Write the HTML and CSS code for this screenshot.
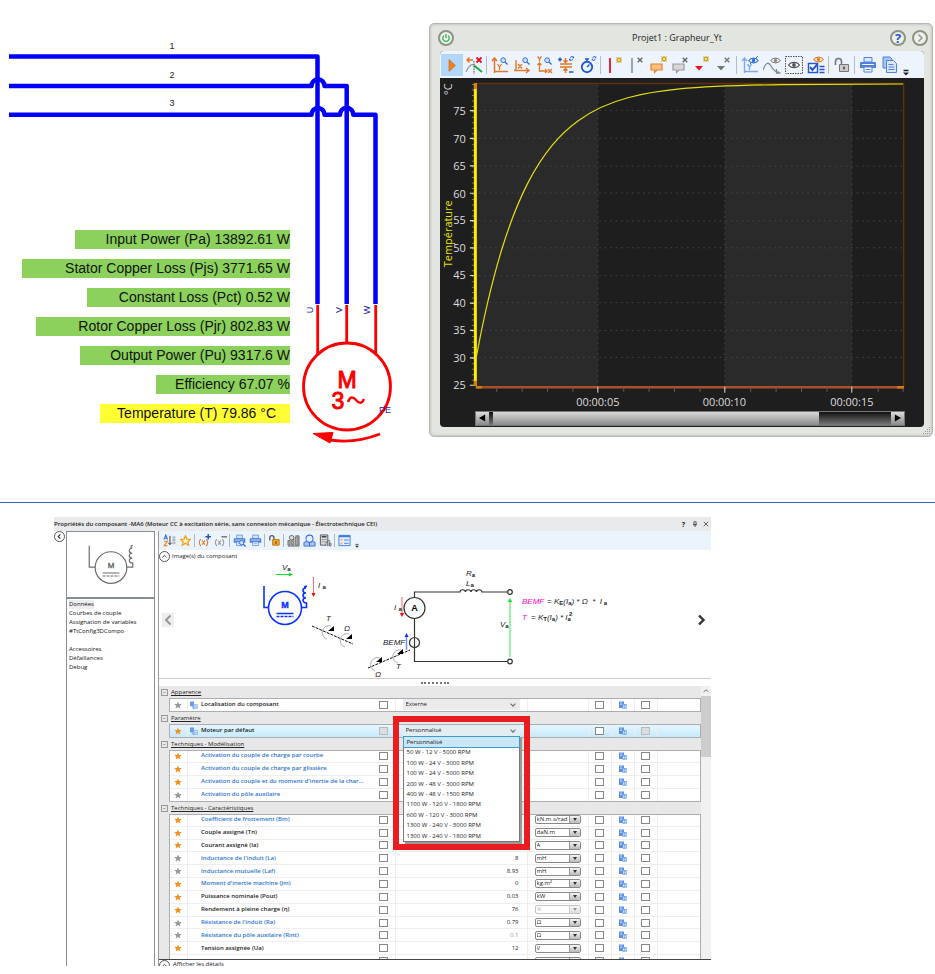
FILE: index.html
```html
<!DOCTYPE html>
<html lang="fr">
<head>
<meta charset="utf-8">
<meta name="viewport" content="width=device-width, initial-scale=1">
<title>Moteur asynchrone et moteur CC</title>
<link rel="stylesheet" href="styles.css">
</head>
<body>
<svg class="defs" aria-hidden="true">
  <defs>
    <symbol id="star" viewBox="0 0 10 10"><path d="M5 .5 6.3 3.7 9.7 3.9 7.1 6.1 8 9.5 5 7.6 2 9.5 2.9 6.1.3 3.9 3.7 3.7Z"/></symbol>
    <symbol id="copy" viewBox="0 0 8 8"><path d="M0 .5h5V7H0z" fill="#5b8ee6"/><path d="M1.2 2h2M1.2 3.5h1.5" stroke="#fff" stroke-width=".7"/><path d="M3.5 3h4.2v4.8H3.5z" fill="#7ba6f0"/><path d="M4.6 4.5v2.2M6.3 4.5v2.2" stroke="#fff" stroke-width=".7"/></symbol>
    <symbol id="var" viewBox="0 0 8 8"><path d="M0 .5h4V5h-4z" fill="#6d9aea"/><path d="M1 5h2v2.500h1" fill="none" stroke="#6d9aea"/><path d="M3.500 3.2h4.2v4.500H3.500z" fill="#8fb3f2"/><path d="M4.300 4.500h2.600M4.300 6h2.600" stroke="#fff" stroke-width=".6"/></symbol>
    <symbol id="lens" viewBox="0 0 8 8"><circle cx="3.2" cy="3.2" r="2.4" fill="#cfe0ff" stroke="#3d6fd8"/><path d="M5 5l2.500 2.500" stroke="#3d6fd8" stroke-width="1.4"/></symbol>
    <symbol id="eye" viewBox="0 0 12 8"><path d="M.6 4C3 .4 9 .4 11.4 4 9 7.6 3 7.6.6 4Z" fill="#fff" stroke="currentColor" stroke-width="1.2"/><circle cx="6" cy="4" r="1.9" fill="currentColor"/></symbol>
    <symbol id="spark" viewBox="0 0 6 6"><path d="M0 0 2 1 3 0l1 1 2-1-1 2 1 1-1 1 1 2-2-1-1 1-1-1-2 1 1-2-1-1 1-1z" fill="#c9a227"/><path d="M2 2h2v2H2z" fill="#ffe066"/></symbol>
    <symbol id="cross" viewBox="0 0 6 6"><path d="M.7.7l4.6 4.6M5.3.7.7 5.3" stroke="currentColor" stroke-width="1.4"/></symbol>
    <symbol id="printer" viewBox="0 0 18 18"><path d="M5 1.5h8V6H5z" fill="#dbe7ff" stroke="#4f82dc"/><path d="M2 6h14q1 0 1 1v5H1V7q0-1 1-1z" fill="#4f82dc"/><path d="M3 8.5h12" stroke="#fff"/><path d="M5 11h8v5H5z" fill="#fff" stroke="#4f82dc"/><path d="M6.500 13.500h5" stroke="#4f82dc"/></symbol>
    <symbol id="refresh" viewBox="0 0 6 6"><path d="M5 1.200Q3 0 1.400 1.800M1 4.800Q3 6 4.600 4.200" fill="none" stroke="#2458d0" stroke-width="1.200"/><path d="M6 0v2.600H3.600zM0 6V3.400h2.400z" fill="#2458d0"/></symbol>
  </defs>
</svg>

<main>
<section class="top">
  <div class="schematic">
    <svg class="wiring" viewBox="0 0 429 450" role="img" aria-label="Moteur triphasé">
      <g fill="none" stroke="#0000fb" stroke-width="4.500" stroke-linejoin="round">
        <path d="M9 56.500H317.500V304"/>
        <path d="M9 86H311.500A6.500 6.800 0 0 1 324.500 86H346.700V304"/>
        <path d="M9 114.700H311.500A6.500 6.800 0 0 1 324.500 114.700H340A6.500 6.800 0 0 1 353.300 114.700H375.500V304"/>
      </g>
      <g fill="none" stroke="#fb0000" stroke-width="2.800">
        <path d="M317.700 305V354M346.700 305V343M375.700 305V354"/>
        <circle cx="347" cy="386.500" r="43.500"/>
        <path d="M348 402q3-8 8-2t8-1" stroke-width="2.400"/>
        <path d="M380 434Q354 444 330 440"/>
        <path d="M313 433.500 333 432.500 330 443Z" fill="#fb0000" stroke-width="1"/>
      </g>
      <g class="wire-text"><text x="172" y="49">1</text><text x="172" y="78">2</text><text x="172" y="106">3</text></g>
      <g class="pin-text"><text transform="translate(312.500 310) rotate(-90)">U</text><text transform="translate(341.500 310) rotate(-90)">V</text><text transform="translate(370 310) rotate(-90)">W</text></g>
      <text class="pe-text" x="385" y="413">PE</text>
      <g class="motor-text"><text x="347" y="388">M</text><text x="338" y="409">3</text></g>
    </svg>
    <ul class="readings">
      <li class="w-pa">Input Power (Pa) 13892.61 W</li>
      <li class="w-pjs">Stator Copper Loss (Pjs) 3771.65 W</li>
      <li class="w-pct">Constant Loss (Pct) 0.52 W</li>
      <li class="w-pjr">Rotor Copper Loss (Pjr) 802.83 W</li>
      <li class="w-pu">Output Power (Pu) 9317.6 W</li>
      <li class="w-eff">Efficiency 67.07 %</li>
      <li class="w-temp">Temperature (T) 79.86 °C</li>
    </ul>
  </div>

  <section class="grapher" aria-label="Grapheur">
    <header class="g-title">
      <button class="round" aria-label="Marche"><svg viewBox="0 0 18 18"><path d="M6.300 6a4.200 4.200 0 1 0 5.400 0M9 4v5" fill="none" stroke="#2fb457" stroke-width="1.700"/></svg></button>
      <h1>Projet1 : Grapheur_Yt</h1>
      <button class="round help" aria-label="Aide">?</button>
      <button class="round" aria-label="Suivant"><svg viewBox="0 0 18 18"><path d="M7 4.500 11.500 9 7 13.500" fill="none" stroke="#999" stroke-width="2"/></svg></button>
    </header>
    <div class="g-inner">
      <div class="g-tools" role="toolbar">
        <button class="on" aria-label="Lecture"><svg viewBox="0 0 18 18"><path d="M6 3.500v12L12.500 9.500z" fill="#f08020" stroke="#c86414" stroke-width=".6"/></svg></button>
        <button aria-label="Effacer les courbes"><svg viewBox="0 0 18 18"><path d="M1 16Q5 7 9 9" fill="none" stroke="#999" stroke-width="1.300"/><path d="M9 9.500 17 16" stroke="#1eae3c" stroke-width="2"/><path d="M9 5v13" stroke="#444" stroke-dasharray="1.500 1"/><path d="M8 4H2M4.500 1.500 2 4l2.500 2.500" fill="none" stroke="#e07020" stroke-width="1.400"/><path d="M11.500 1.500l5 5M16.500 1.500l-5 5" stroke="#e81123" stroke-width="1.900"/></svg></button>
        <i></i>
        <button aria-label="Zoom Y"><svg viewBox="0 0 18 18"><path d="M3.500 17V2M1 5l2.500-3L6 5M3 15.500h14" fill="none" stroke="#e07828" stroke-width="1.500"/><path d="M6.500 8l2 3 2-3M8.500 11v3" fill="none" stroke="#e07828" stroke-width="1.200"/><use href="#lens" x="9" y="1" width="8" height="8"/></svg></button>
        <button aria-label="Zoom X"><svg viewBox="0 0 18 18"><path d="M3 4v11M1 14.500h14M13 12l3 2.500-3 2.500M5 8l4 4.500M9 8l-4 4.500" fill="none" stroke="#e07828" stroke-width="1.400"/><use href="#lens" x="9" y="1" width="8" height="8"/></svg></button>
        <button aria-label="Zoom X et Y"><svg viewBox="0 0 18 18"><path d="M4.500 7v8h7M2.500 9l2-2 2 2M10 13l2 2-2 2M2.500.5l2 2.500 2-2.500M4.500 3v2.500M13 13l4 4M17 13l-4 4" fill="none" stroke="#e07828" stroke-width="1.300"/><use href="#lens" x="9" y="1" width="8" height="8"/></svg></button>
        <button aria-label="Ajuster"><svg viewBox="0 0 18 18"><path d="M3 8h12M3 11h12M8.500 2v4.500M6.500 4.500l2 2 2-2M8.500 17v-4.500M6.500 14.500l2-2 2 2" fill="none" stroke="#e07828" stroke-width="1.500"/><path d="M1 3.500h4M3 1.500v4M12 16h4.500" stroke="#2458d0" stroke-width="1.500"/><use href="#refresh" x="12" y="0" width="5" height="5"/></svg></button>
        <button aria-label="Temps"><svg viewBox="0 0 18 18"><circle cx="8" cy="11" r="5.200" fill="none" stroke="#2458d0" stroke-width="1.900"/><path d="M6 3h4M8 3v3M8 11l2.500-2.500" stroke="#2458d0" stroke-width="1.500"/><use href="#refresh" x="12.500" y="0" width="5" height="5"/></svg></button>
        <i></i>
        <button aria-label="Ajouter curseur"><svg viewBox="0 0 18 18"><path d="M5 2v15" stroke="#e81123" stroke-width="1.800"/><use href="#spark" x="11" y="1" width="6" height="6"/></svg></button>
        <button aria-label="Supprimer curseur"><svg viewBox="0 0 18 18" color="#666"><path d="M5 2v15" stroke="#888" stroke-width="1.500"/><use href="#cross" x="10" y="1" width="6" height="6"/></svg></button>
        <button aria-label="Ajouter note"><svg viewBox="0 0 18 18"><path d="M2 8h11v6H8l-2.500 2.500V14H2z" fill="#fdc080" stroke="#e0822c" stroke-width="1.200"/><use href="#spark" x="12" y="0" width="6" height="6"/></svg></button>
        <button aria-label="Supprimer note"><svg viewBox="0 0 18 18" color="#666"><path d="M2 8h11v6H8l-2.500 2.500V14H2z" fill="#d8d8d8" stroke="#999" stroke-width="1.200"/><use href="#cross" x="11" y="1" width="6" height="6"/></svg></button>
        <button aria-label="Ajouter repère"><svg viewBox="0 0 18 18"><path d="M2 10h8l-4 4.500z" fill="#e81123"/><use href="#spark" x="10" y="0" width="6" height="6"/></svg></button>
        <button aria-label="Supprimer repère"><svg viewBox="0 0 18 18" color="#777"><path d="M2 10h8l-4 4.500z" fill="#777"/><use href="#cross" x="9" y="1" width="6" height="6"/></svg></button>
        <i></i>
        <button aria-label="Masquer axe"><svg viewBox="0 0 18 18" color="#2f6fe0"><path d="M3.500 17V2M1 5l2.500-3L6 5M3 15.500h14M6.500 8l2 3 2-3M8.500 11v3" fill="none" stroke="#7fa8ee" stroke-width="1.400"/><use href="#eye" x="7" y="1" width="11" height="7"/><path d="M9 8 17 0" stroke="#2f6fe0"/></svg></button>
        <button aria-label="Afficher courbe"><svg viewBox="0 0 18 18" color="#888"><path d="M0 14Q4 3 8 10t8 6M13.500 13v4h4" fill="none" stroke="#888" stroke-width="1.300"/><use href="#eye" x="7" y="1" width="11" height="7"/></svg></button>
        <button aria-label="Afficher"><svg viewBox="0 0 18 18" color="#555"><path d="M.5.5h17v17H.5z" fill="none" stroke="#555" stroke-dasharray="1.500 1"/><use href="#eye" x="3" y="5" width="12" height="8"/></svg></button>
        <button aria-label="Options de courbes"><svg viewBox="0 0 18 18" color="#ee7a22"><path d="M1.500 7.500h9v9h-9z" fill="#fff" stroke="#2458d0" stroke-width="1.500"/><path d="M3 11l2.500 3 5-6" fill="none" stroke="#2458d0" stroke-width="2"/><path d="M12.500 10.500h5M12.500 13.500h5M12.500 16.500h5" stroke="#2458d0" stroke-width="1.300"/><use href="#eye" x="6" y="0" width="11" height="7"/></svg></button>
        <i></i>
        <button aria-label="Déverrouiller"><svg viewBox="0 0 18 18"><path d="M2.500 9V5.500a3 3 0 0 1 6 0V8" fill="none" stroke="#777" stroke-width="1.600"/><path d="M6.500 8.500h9v7h-9z" fill="#ccc" stroke="#777"/><path d="M10 10.500h2v3h-2z" fill="#666"/></svg></button>
        <i></i>
        <button aria-label="Imprimer"><svg viewBox="0 0 18 18"><use href="#printer"/></svg></button>
        <button aria-label="Copier"><svg viewBox="0 0 18 18"><path d="M2 1h7l2 2v9H2z" fill="#a9c4f5" stroke="#4f82dc"/><path d="M5.500 4.500h7l3 3v9h-10z" fill="#dbe7ff" stroke="#4f82dc"/><path d="M7.500 8.500h5M7.500 11h6M7.500 13.500h6" stroke="#4f82dc"/></svg></button>
        <button class="more" aria-label="Plus"><svg viewBox="0 0 8 8"><path d="M1.500 2.500h5" stroke="#222" stroke-width="1.300"/><path d="M1 4.500h6L4 7.500z" fill="#222"/></svg></button>
      </div>
      <svg class="plot" viewBox="439 77 486 334" role="img" aria-label="Température en °C">
        <path d="M475 83H597.500V387H475zM725 83H852.500V387H725z" fill="#2a2a2a"/>
        <g stroke="#484848" stroke-width="1" stroke-dasharray="1.500 4">
          <path d="M478 109.500H903M478 137.500H903M478 165.500H903M478 192.500H903M478 220.500H903M478 247.500H903M478 275.500H903M478 302.500H903M478 330.500H903M478 357.500H903"/>
          <path d="M597.500 84V386M725 84V386M852.500 84V386"/>
        </g>
        <path d="M475 82.500H904.500V386" fill="none" stroke="#643008" stroke-width="1.400"/>
        <path d="M475 387.500H905" stroke="#a8502a" stroke-width="2.600"/>
        <path d="M475 387.500h6M898 387.500h7" stroke="#d87c10" stroke-width="2.600"/>
        <path d="M472 83V385" stroke="#777" stroke-width="2" stroke-dasharray="1 4.500"/>
        <path d="M474.500 82V386" stroke="#ffee00" stroke-width="3"/>
        <path d="M474.500 82v6M474.500 381v5" stroke="#d87c10" stroke-width="3"/>
        <path d="M469 109.700h4M469 137.700h4M469 165.300h4M469 192.700h4M469 220.200h4M469 247.600h4M469 275.300h4M469 303h4M469 330.400h4M469 358h4M469 385.500h4" stroke="#ddd" stroke-width="1.200"/>
        <path d="M496 389v3M521.500 389v3M547 389v3M572.500 389v3M623.500 389v3M649 389v3M674.500 389v3M700 389v3M751 389v3M776.500 389v3M802 389v3M827.500 389v3M879 389v3M904 389v3" stroke="#666"/>
        <path d="M597.500 387v6M725 387v6M852.500 387v6" stroke="#ddd"/>
        <path d="M475.500 357C484 311.400 492.500 276.900 501 249.200C509.500 221.500 518 200.600 526.500 183.800C535 167 543.500 154.300 552 144.100C560.500 133.900 569 126.300 577.500 120.100C594.500 107.700 611.500 101.100 628.500 96.600C645.500 92.100 662.500 89.700 679.500 88C713.500 84.700 747.500 84.200 781.500 83.700L904 83" fill="none" stroke="#e3df10" stroke-width="1.200"/>
        <g class="y-text"><text x="465" y="114">75</text><text x="465" y="142">70</text><text x="465" y="169">65</text><text x="465" y="197">60</text><text x="465" y="224">55</text><text x="465" y="252">50</text><text x="465" y="279">45</text><text x="465" y="307">40</text><text x="465" y="334">35</text><text x="465" y="362">30</text><text x="465" y="389">25</text></g>
        <g class="x-text"><text x="597.500" y="406">00:00:05</text><text x="724.500" y="406">00:00:10</text><text x="852.500" y="406">00:00:15</text></g>
        <text class="unit-text" transform="translate(451 94) rotate(-90)">°C</text>
        <text class="axis-text" transform="translate(451 267) rotate(-90)">Température</text>
      </svg>
      <div class="g-scroll">
        <button aria-label="Défiler à gauche"><svg viewBox="0 0 8 8"><path d="M7 0v8L0 4z"/></svg></button>
        <div class="g-track"><div class="g-thumb"></div></div>
        <button aria-label="Défiler à droite"><svg viewBox="0 0 8 8"><path d="M1 0v8l7-4z"/></svg></button>
      </div>
    </div>
    <svg class="grip" viewBox="0 0 9 9" aria-hidden="true"><path d="M7 1h1v1H7zM5 3h1v1H5zM7 3h1v1H7zM3 5h1v1H3zM5 5h1v1H5zM7 5h1v1H7zM1 7h1v1H1zM3 7h1v1H3zM5 7h1v1H5zM7 7h1v1H7z" fill="#999"/></svg>
  </section>
</section>

<hr>

<section class="props">
  <header class="p-title">
    <h2>Propriétés du composant -MA6 (Moteur CC à excitation série, sans connexion mécanique - Électrotechnique CEI)</h2>
    <button aria-label="Aide">?</button>
    <button aria-label="Épingler"><svg viewBox="0 0 8 8"><path d="M2.500 1h3v4h-3zM1.500 5h5M4 5v3" fill="none" stroke="#333"/></svg></button>
    <button aria-label="Fermer"><svg viewBox="0 0 8 8"><path d="M1 1l6 6M7 1 1 7" stroke="#333"/></svg></button>
  </header>
  <div class="p-body">
    <button class="fold" aria-label="Réduire"><svg viewBox="0 0 8 8"><path d="M5 1.500 2.500 4 5 6.500" fill="none" stroke="#333" stroke-width="1.300"/></svg></button>
    <aside>
      <svg class="thumb" viewBox="66 532 88 66" role="img" aria-label="Symbole du moteur">
        <g fill="none" stroke="#6c6c6c" stroke-width="1.200"><circle cx="110.500" cy="568" r="16"/><path d="M88.500 546V567.500H94.500M126.500 567.500H132.500V563.500C128 563.500 128 558 132 558.500C128 558.500 128 553 132 553.500C128 553.500 128 548 132 548.500C130 548 130 546 132.500 545.500M102 573.500H119"/><path d="M102 576.500H119" stroke-dasharray="3 1"/></g>
        <text class="thumb-m" x="110.500" y="568">M</text>
      </svg>
      <nav>
        <a class="cur" href="#donnees">Données</a>
        <a href="#courbes">Courbes de couple</a>
        <a href="#variables">Assignation de variables</a>
        <a href="#config">#TtConfig3DCompo</a>
        <a class="apart" href="#accessoires">Accessoires</a>
        <a href="#defaillances">Défaillances</a>
        <a href="#debug">Debug</a>
      </nav>
    </aside>
    <div class="p-main">
      <div class="p-tools" role="toolbar">
        <button aria-label="Trier"><svg viewBox="0 0 14 14"><path d="M1 6 3 1l2 5M1.800 4.500h2.400" fill="none" stroke="#2f6fd0" stroke-width="1.100"/><path d="M1.300 8h3.400L1.300 12.500h3.400" fill="none" stroke="#ee8a1d" stroke-width="1.200"/><path d="M7.500 2v9M5.800 9.500l1.700 2 1.700-2" fill="none" stroke="#333"/><path d="M10.500 3H13v1.500h-2.500zM10.500 6H13v1.500h-2.500zM10.500 9H13v1.500h-2.500z" fill="none" stroke="#888" stroke-width=".6"/></svg></button>
        <button aria-label="Favoris"><svg viewBox="-1 -1 12 12" fill="#fff3c9" stroke="#f0a020" stroke-width="1.100"><use href="#star" width="10" height="10"/></svg></button>
        <i></i>
        <button aria-label="Ajouter variable"><svg viewBox="0 0 14 14"><path d="M3 5.500Q0 9 3 13M9 5.500q3 3.500 0 7.500M4.500 7l3 4.500M7.500 7l-3 4.500" fill="none" stroke="#e07828" stroke-width="1.100"/><path d="M11 0v6M8 3h6" stroke="#2458d0" stroke-width="1.600"/></svg></button>
        <button aria-label="Retirer variable"><svg viewBox="0 0 14 14"><path d="M3 5.500Q0 9 3 13M9 5.500q3 3.500 0 7.500M4.500 7l3 4.500M7.500 7l-3 4.500" fill="none" stroke="#999" stroke-width="1.100"/><path d="M8 3h6" stroke="#777" stroke-width="1.600"/></svg></button>
        <i></i>
        <button aria-label="Aperçu avant impression"><svg viewBox="0 0 18 18"><use href="#printer"/><use href="#lens" x="8" y="8" width="10" height="10"/></svg></button>
        <button aria-label="Imprimer"><svg viewBox="0 0 18 18"><use href="#printer"/></svg></button>
        <i></i>
        <button aria-label="Déverrouiller"><svg viewBox="0 0 14 14"><path d="M2 7V4a2.200 2.200 0 0 1 4.400 0V6" fill="none" stroke="#555" stroke-width="1.400"/><path d="M5 6h7v6H5z" fill="#f5a623" stroke="#b97510"/><path d="M8 8h1.200v2.500H8z" fill="#333"/></svg></button>
        <i></i>
        <button aria-label="Mesures"><svg viewBox="0 0 14 14"><path d="M1 12V7h2.500v5zM5 12V5h2.500v7zM9 12V3h3v9z" fill="#aaa" stroke="#555" stroke-width=".7"/><circle cx="5" cy="4" r="2.500" fill="#ddd" stroke="#666"/><path d="M9 2h4v11H1" fill="none" stroke="#666"/></svg></button>
        <button aria-label="Rechercher"><svg viewBox="0 0 14 14"><path d="M1 13V9q3-2 6 0v4zM7 13V9q3-2 6 0v4z" fill="#a9c4f5" stroke="#3d6fd8"/><circle cx="7" cy="5" r="3.800" fill="#e8f0ff" stroke="#3d6fd8" stroke-width="1.100"/></svg></button>
        <button aria-label="Calculer"><svg viewBox="0 0 14 14"><path d="M1.500 1h8v11h-8z" fill="#ddd" stroke="#555"/><path d="M3 3h5" stroke="#333" stroke-width="1.500"/><path d="M3 6h5M3 8.500h5" stroke="#555" stroke-dasharray="1 1"/><path d="M7.500 13V9h2v4M9.500 13V7h2v6M11.500 13v-3h1.500v3z" fill="#eee" stroke="#555" stroke-width=".7"/></svg></button>
        <i></i>
        <button aria-label="Liste"><svg viewBox="0 0 14 14"><path d="M1 1.500h12v11H1z" fill="#e8f1ff" stroke="#3c7be0"/><path d="M1 2.500h12" stroke="#3c7be0" stroke-width="2"/><path d="M2.500 6l1 1L5 5M2.500 10l1 1L5 9" fill="none" stroke="#ee8a1d"/><path d="M6.500 6.500h5M6.500 10h5" stroke="#3c7be0"/></svg></button>
        <button class="more" aria-label="Plus"><svg viewBox="0 0 8 8"><path d="M2 3.200h4" stroke="#222"/><path d="M1.500 5h5L4 7.500z" fill="#222"/></svg></button>
      </div>
      <div class="p-sub"><button class="fold" aria-label="Replier"><svg viewBox="0 0 8 8"><path d="M1.500 5 4 2.800 6.500 5" fill="none" stroke="#333"/></svg></button><span>Image(s) du composant</span></div>
      <div class="carousel">
        <button class="prev" aria-label="Image précédente"><svg viewBox="0 0 12 14"><path d="M8.500 2.500 4 7l4.500 4.500" fill="none" stroke="#999" stroke-width="2"/></svg></button>
        <svg class="model" viewBox="174 562 522 116" role="img" aria-label="Schéma équivalent">
          <g fill="none" stroke="#0b32ff" stroke-width="1.600"><circle cx="285" cy="608" r="16.500"/><path d="M264 586V607.500H268.500M301.500 607.500H306.500V603C302 603 302 597.500 306 598C302 598 302 592.500 306 593C302 593 302 587.500 306 588C304 588 304 586 307 586.500M276.500 613.500H293.500"/><path d="M276.500 616.500H293.500" stroke-dasharray="3 1"/></g>
          <text class="blue-m" x="285" y="608">M</text>
          <path d="M276 574.500H290" stroke="#0be62a"/><path d="M293 574.500l-4-2v4z" fill="#0be62a"/>
          <path d="M313.500 577V594" stroke="#ff7070"/><path d="M313.500 597l-2-4h4z" fill="#f00"/>
          <path d="M402 597V613" stroke="#ffb0b0" stroke-width="2"/><path d="M402 617l-2-4h4z" fill="#f00"/>
          <path d="M406.500 650V637" stroke="#7090ff" stroke-width="1.500"/><path d="M406.500 633l-2 4h4z" fill="#0b32ff"/>
          <path d="M510 657V602" stroke="#85f095" stroke-width="1.600"/><path d="M510 598l-2.200 4h4.400z" fill="#0be62a"/>
          <g fill="none" stroke="#333" stroke-width="1.200"><path d="M414.500 597.500V592H460C460 589 465 589 465.500 592C465.500 589 470.500 589 471 592C471 589 476 589 476.500 592C476.500 589 481.500 589 482 592H507.500M414.500 618.500V661.500H507.500"/><circle cx="414.500" cy="608" r="10.500"/><circle cx="414.500" cy="642.500" r="5"/><circle cx="510" cy="592" r="2.300"/><circle cx="510" cy="661.500" r="2.300"/></g>
          <g fill="none" stroke="#111" stroke-dasharray="3 1"><path d="M312 626 353 644M368 668 410 650"/></g>
          <g fill="none" stroke="#999" stroke-width=".8"><path d="M331 626A6.500 6.500 0 1 0 327 639M349 634A6.500 6.500 0 1 0 345 647M380 658A6.500 6.500 0 1 0 375 671M401 650A6.500 6.500 0 1 0 398 663"/></g>
          <path d="M334 626v5h-6zM352 634v5h-6zM382 657v5h-6zM403 649v5h-6z"/>
          <g class="sym"><text x="282" y="570">V<tspan class="sub" dy="1">a</tspan></text><text x="318" y="588">I <tspan class="sub" dy="1">a</tspan></text><text x="326" y="621">T</text><text x="344" y="631">Ω</text><text x="375" y="677">Ω</text><text x="396" y="669">T</text><text x="383" y="645">BEMF</text><text x="394" y="610">I <tspan class="sub" dy="1">a</tspan></text><text x="466" y="576">R<tspan class="sub" dy="1">a</tspan></text><text x="466" y="586">L<tspan class="sub" dy="1">a</tspan></text><text x="500" y="627">V<tspan class="sub" dy="1">a</tspan></text>
            <text x="522" y="604"><tspan class="pink">BEMF</tspan></text><text x="547" y="604">= K<tspan class="sub" dy="1">E</tspan><tspan dy="-1">(I</tspan><tspan class="sub" dy="1">a</tspan><tspan dy="-1">) * Ω &#160;* &#160;I</tspan><tspan class="sub" dy="1"> a</tspan></text>
            <text x="522" y="620"><tspan class="pink">T</tspan></text><text x="531" y="620">= K<tspan class="sub" dy="1">T</tspan><tspan dy="-1">(I</tspan><tspan class="sub" dy="1">a</tspan><tspan dy="-1">) * I</tspan><tspan class="sub" dy="1">a</tspan></text><text class="sub" x="569" y="616">2</text></g>
          <text class="amp" x="414.500" y="611">A</text>
        </svg>
        <button aria-label="Image suivante"><svg viewBox="0 0 12 14"><path d="M3 2.500 7.500 7 3 11.500" fill="none" stroke="#333" stroke-width="2.400"/></svg></button>
      </div>
      <div class="splitter"></div>
      <div class="sheet">
        <div class="gutter"></div>
        <div class="groups">
          <h3>Apparence</h3>
          <table class="one"><colgroup><col class="c-star"><col class="c-ico"><col class="c-name"><col class="c-chk"><col class="c-val"><col class="c-unit"><col class="c-s"><col class="c-s"><col class="c-s"><col></colgroup>
            <tbody><tr><td><svg class="st"><use href="#star"/></svg></td><td><svg class="cp"><use href="#var"/></svg></td><th scope="row">Localisation du composant</th><td><input type="checkbox" aria-label="Localisation"></td><td class="pick"><select aria-label="Localisation du composant"><option>Externe</option></select></td><td></td><td><input type="checkbox" aria-label="A"></td><td><svg class="cp"><use href="#copy"/></svg></td><td><input type="checkbox" aria-label="B"></td><td></td></tr></tbody></table>
          <h3>Paramètre</h3>
          <table class="one hot"><colgroup><col class="c-star"><col class="c-ico"><col class="c-name"><col class="c-chk"><col class="c-val"><col class="c-unit"><col class="c-s"><col class="c-s"><col class="c-s"><col></colgroup>
            <tbody><tr><td><svg class="st gold"><use href="#star"/></svg></td><td><svg class="cp"><use href="#var"/></svg></td><th scope="row">Moteur par défaut</th><td><input type="checkbox" disabled aria-label="Moteur"></td><td class="pick"><select aria-label="Moteur par défaut"><option>Personnalisé</option></select>
              <ul class="menu" role="listbox" aria-label="Moteurs"><li role="option" aria-selected="true">Personnalisé</li><li role="option">50 W - 12 V - 5000 RPM</li><li role="option">100 W - 24 V - 3000 RPM</li><li role="option">100 W - 24 V - 5000 RPM</li><li role="option">200 W - 48 V - 3000 RPM</li><li role="option">400 W - 48 V - 1500 RPM</li><li role="option">1100 W - 120 V - 1800 RPM</li><li role="option">600 W - 120 V - 3000 RPM</li><li role="option">1300 W - 240 V - 3000 RPM</li><li role="option">1300 W - 240 V - 1800 RPM</li></ul><div class="frame"></div></td><td></td><td><input type="checkbox" aria-label="A"></td><td><svg class="cp"><use href="#copy"/></svg></td><td><input type="checkbox" disabled aria-label="B"></td><td></td></tr></tbody></table>
          <h3>Techniques - Modélisation</h3>
          <table class="four"><colgroup><col class="c-star"><col class="c-ico"><col class="c-name"><col class="c-chk"><col class="c-val"><col class="c-unit"><col class="c-s"><col class="c-s"><col class="c-s"><col></colgroup>
            <tbody>
            <tr><td><svg class="st gold"><use href="#star"/></svg></td><td></td><th scope="row" class="bl">Activation du couple de charge par courbe</th><td><input type="checkbox" aria-label="Courbe"></td><td></td><td></td><td><input type="checkbox" aria-label="A"></td><td><svg class="cp"><use href="#copy"/></svg></td><td><input type="checkbox" aria-label="B"></td><td></td></tr>
            <tr><td><svg class="st gold"><use href="#star"/></svg></td><td></td><th scope="row" class="bl">Activation du couple de charge par glissière</th><td><input type="checkbox" aria-label="Glissière"></td><td></td><td></td><td><input type="checkbox" aria-label="A"></td><td><svg class="cp"><use href="#copy"/></svg></td><td><input type="checkbox" aria-label="B"></td><td></td></tr>
            <tr><td><svg class="st gold"><use href="#star"/></svg></td><td></td><th scope="row" class="bl">Activation du couple et du moment d'inertie de la char...</th><td><input type="checkbox" aria-label="Inertie"></td><td></td><td></td><td><input type="checkbox" aria-label="A"></td><td><svg class="cp"><use href="#copy"/></svg></td><td><input type="checkbox" aria-label="B"></td><td></td></tr>
            <tr><td><svg class="st"><use href="#star"/></svg></td><td></td><th scope="row" class="bl">Activation du pôle auxilaire</th><td><input type="checkbox" aria-label="Pôle"></td><td></td><td></td><td><input type="checkbox" aria-label="A"></td><td><svg class="cp"><use href="#copy"/></svg></td><td><input type="checkbox" aria-label="B"></td><td></td></tr>
            </tbody></table>
          <h3>Techniques - Caractéristiques</h3>
          <table class="many"><colgroup><col class="c-star"><col class="c-ico"><col class="c-name"><col class="c-chk"><col class="c-val"><col class="c-unit"><col class="c-s"><col class="c-s"><col class="c-s"><col></colgroup>
            <tbody>
            <tr><td><svg class="st gold"><use href="#star"/></svg></td><td></td><th scope="row" class="bl">Coefficient de frottement (Bm)</th><td><input type="checkbox" aria-label="Bm"></td><td class="num"></td><td><span class="unit"><select aria-label="Unité Bm"><option>kN.m.s/rad</option></select><b></b></span></td><td><input type="checkbox" aria-label="A"></td><td><svg class="cp"><use href="#copy"/></svg></td><td><input type="checkbox" aria-label="B"></td><td></td></tr>
            <tr><td><svg class="st gold"><use href="#star"/></svg></td><td></td><th scope="row">Couple assigné (Tn)</th><td><input type="checkbox" aria-label="Tn"></td><td class="num"></td><td><span class="unit"><select aria-label="Unité Tn"><option>daN.m</option></select><b></b></span></td><td><input type="checkbox" aria-label="A"></td><td><svg class="cp"><use href="#copy"/></svg></td><td><input type="checkbox" aria-label="B"></td><td></td></tr>
            <tr><td><svg class="st gold"><use href="#star"/></svg></td><td></td><th scope="row">Courant assigné (Ia)</th><td><input type="checkbox" aria-label="Ia"></td><td class="num"></td><td><span class="unit"><select aria-label="Unité Ia"><option>A</option></select><b></b></span></td><td><input type="checkbox" aria-label="A"></td><td><svg class="cp"><use href="#copy"/></svg></td><td><input type="checkbox" aria-label="B"></td><td></td></tr>
            <tr><td><svg class="st"><use href="#star"/></svg></td><td></td><th scope="row" class="bl">Inductance de l'induit (La)</th><td><input type="checkbox" aria-label="La"></td><td class="num">8</td><td><span class="unit"><select aria-label="Unité La"><option>mH</option></select><b></b></span></td><td><input type="checkbox" aria-label="A"></td><td><svg class="cp"><use href="#copy"/></svg></td><td><input type="checkbox" aria-label="B"></td><td></td></tr>
            <tr><td><svg class="st"><use href="#star"/></svg></td><td></td><th scope="row" class="bl">Inductance mutuelle (Laf)</th><td><input type="checkbox" aria-label="Laf"></td><td class="num">8.93</td><td><span class="unit"><select aria-label="Unité Laf"><option>mH</option></select><b></b></span></td><td><input type="checkbox" aria-label="A"></td><td><svg class="cp"><use href="#copy"/></svg></td><td><input type="checkbox" aria-label="B"></td><td></td></tr>
            <tr><td><svg class="st gold"><use href="#star"/></svg></td><td></td><th scope="row" class="bl">Moment d'inertie machine (Jm)</th><td><input type="checkbox" aria-label="Jm"></td><td class="num">0</td><td><span class="unit"><select aria-label="Unité Jm"><option>kg.m²</option></select><b></b></span></td><td><input type="checkbox" aria-label="A"></td><td><svg class="cp"><use href="#copy"/></svg></td><td><input type="checkbox" aria-label="B"></td><td></td></tr>
            <tr><td><svg class="st gold"><use href="#star"/></svg></td><td></td><th scope="row">Puissance nominale (Pout)</th><td><input type="checkbox" aria-label="Pout"></td><td class="num">0.03</td><td><span class="unit"><select aria-label="Unité Pout"><option>kW</option></select><b></b></span></td><td><input type="checkbox" aria-label="A"></td><td><svg class="cp"><use href="#copy"/></svg></td><td><input type="checkbox" aria-label="B"></td><td></td></tr>
            <tr><td><svg class="st gold"><use href="#star"/></svg></td><td></td><th scope="row">Rendement à pleine charge (η)</th><td><input type="checkbox" aria-label="η"></td><td class="num">76</td><td><span class="unit off"><select aria-label="Unité η" disabled><option>%</option></select><b></b></span></td><td><input type="checkbox" aria-label="A"></td><td><svg class="cp"><use href="#copy"/></svg></td><td><input type="checkbox" aria-label="B"></td><td></td></tr>
            <tr><td><svg class="st"><use href="#star"/></svg></td><td></td><th scope="row" class="bl">Résistance de l'induit (Ra)</th><td><input type="checkbox" aria-label="Ra"></td><td class="num">0.79</td><td><span class="unit"><select aria-label="Unité Ra"><option>Ω</option></select><b></b></span></td><td><input type="checkbox" aria-label="A"></td><td><svg class="cp"><use href="#copy"/></svg></td><td><input type="checkbox" aria-label="B"></td><td></td></tr>
            <tr><td><svg class="st"><use href="#star"/></svg></td><td></td><th scope="row" class="bl">Résistance du pôle auxilaire (Rint)</th><td><input type="checkbox" aria-label="Rint"></td><td class="num dim">0.1</td><td><span class="unit"><select aria-label="Unité Rint"><option>Ω</option></select><b></b></span></td><td><input type="checkbox" aria-label="A"></td><td><svg class="cp"><use href="#copy"/></svg></td><td><input type="checkbox" aria-label="B"></td><td></td></tr>
            <tr><td><svg class="st gold"><use href="#star"/></svg></td><td></td><th scope="row">Tension assignée (Ua)</th><td><input type="checkbox" aria-label="Ua"></td><td class="num">12</td><td><span class="unit"><select aria-label="Unité Ua"><option>V</option></select><b></b></span></td><td><input type="checkbox" aria-label="A"></td><td><svg class="cp"><use href="#copy"/></svg></td><td><input type="checkbox" aria-label="B"></td><td></td></tr>
            <tr><td></td><td></td><th scope="row"></th><td><input type="checkbox" aria-label="C"></td><td class="num"></td><td><span class="unit"><select aria-label="Unité"><option> </option></select><b></b></span></td><td><input type="checkbox" aria-label="A"></td><td><svg class="cp"><use href="#copy"/></svg></td><td><input type="checkbox" aria-label="B"></td><td></td></tr>
            </tbody></table>
        </div>
        <div class="v-scroll"><svg viewBox="0 0 8 8"><path d="M1.500 5 4 2.800 6.500 5" fill="none" stroke="#777"/></svg><div></div><svg viewBox="0 0 8 8"><path d="M1.500 3 4 5.200 6.500 3" fill="none" stroke="#777"/></svg></div>
      </div>
      <footer class="p-foot"><button class="fold" aria-label="Déplier"><svg viewBox="0 0 8 8"><path d="M1.500 5 4 2.800 6.500 5" fill="none" stroke="#333"/></svg></button><span>Afficher les détails</span></footer>
    </div>
  </div>
</section>
</main>
</body>
</html>
```
FILE: styles.css
```css
* { box-sizing: border-box; }
body { margin: 0; background: #fff; color: #222; font-family: "Open Sans", "Noto Sans", sans-serif; }
h1, h2, h3, ul { margin: 0; padding: 0; font-weight: normal; }
ul { list-style: none; }
button { border: 0; padding: 0; background: none; font: inherit; color: inherit; display: flex; align-items: center; justify-content: center; }
svg { display: block; }
.defs { position: absolute; width: 0; height: 0; }

/* three-phase motor and its readings */
.top { display: grid; grid-template-columns: 429px minmax(0, 1fr); align-items: start; }
.schematic { display: grid; }
.wiring { grid-area: 1 / 1; width: 100%; }
.readings { grid-area: 1 / 1; width: 290px; padding-top: 230px; display: flex; flex-direction: column; align-items: flex-end; gap: 10px; font: 14px/19px "Liberation Sans", sans-serif; color: #111; }
.readings li { background: #8bd15b; text-align: right; white-space: nowrap; }
.readings .w-pa { width: 215px; }
.readings .w-pjs { width: 268px; }
.readings .w-pct { width: 203px; }
.readings .w-pjr { width: 254px; }
.readings .w-pu { width: 210px; }
.readings .w-eff { width: 134px; }
.readings .w-temp { width: 190px; padding-right: 14px; background: #ffff33; }
.wire-text, .pin-text, .pe-text, .motor-text { font-family: "Liberation Sans", sans-serif; text-anchor: middle; }
.wire-text { font-size: 9px; fill: #222; }
.pin-text { font-size: 9px; fill: #1c1caa; }
.pe-text { font-size: 9px; fill: #1c1caa; }
.motor-text { font-size: 23px; fill: #fb0000; stroke: #fb0000; stroke-width: 1; }

/* grapher window */
.grapher { position: relative; margin: 23px 2px 0 0; padding: 0 8px 9px 10px; border: 1px solid #b4b8b0; border-radius: 5px; background: #e3e6e0; box-shadow: inset 0 0 3px #aaa; }
.g-title { height: 27px; display: flex; align-items: center; gap: 6px; margin: 0 -4px 0 -2px; }
.g-title h1 { flex: 1; text-align: center; font-size: 9px; padding-left: 10px; color: #222; }
.round { width: 16px; height: 16px; border: 2px solid #8c9484; border-radius: 50%; background: #eef0ea; }
.round svg { width: 14px; height: 14px; flex: none; }
.help { font-size: 13px; line-height: 12px; font-weight: bold; color: #2458d0; }
.g-inner { background: #1e1e1e; border-radius: 4px; overflow: hidden; padding-bottom: 1px; }
.g-tools { height: 27px; display: flex; align-items: center; background: #eef4fd; padding-left: 1px; }
.g-tools button { width: 22px; height: 22px; flex: none; }
.g-tools svg { width: 18px; height: 18px; }
.g-tools .on { background: #b3d6fb; }
.g-tools i { width: 1px; height: 18px; margin: 0 2px 0 1px; background: #b5bbc4; flex: none; }
.g-tools .more, .p-tools .more { width: 10px; align-items: flex-end; }
.g-tools .more svg { width: 8px; height: 8px; }
.p-tools .more svg { width: 6px; height: 6px; }
.plot { width: 100%; }
.y-text, .x-text, .unit-text, .axis-text { font-family: "Open Sans", sans-serif; font-size: 11px; fill: #ddd; }
.y-text { text-anchor: end; }
.x-text { text-anchor: middle; }
.axis-text { fill: #e6e200; }
.g-scroll { margin: 0 19px 0 35px; height: 15px; display: flex; border: 1px solid #777; }
.g-scroll button { width: 13px; background: linear-gradient(#ddd, #888); }
.g-scroll button svg { width: 7px; height: 8px; }
.g-track { flex: 1; background: linear-gradient(#111, #777); padding-left: 4px; }
.g-thumb { width: 82%; height: 100%; background: linear-gradient(#d8d8d8, #8a8a8a); }
.grip { position: absolute; right: 1px; bottom: 1px; width: 9px; height: 9px; }

hr { margin: 52px 0 14px; border: 0; border-top: 1px solid #3a62b5; }

/* component properties window */
.props { margin-left: 54px; max-width: 657px; font-size: 6px; line-height: 9px; }
.p-title { height: 14px; display: flex; align-items: center; gap: 2px; background: #e9eaec; padding-right: 1px; }
.p-title h2 { flex: 1; font-size: 6px; font-weight: 600; white-space: nowrap; }
.p-title button { width: 9px; font-size: 7px; font-weight: bold; }
.p-title svg { width: 6px; height: 6px; }
.p-body { display: grid; grid-template-columns: 12px 89px minmax(0, 1fr); align-items: stretch; height: 435px; overflow: hidden; }
.fold { width: 11px; height: 11px; border: 1px solid #555; border-radius: 50%; background: #fff; flex: none; }
.fold svg { width: 7px; height: 7px; }
aside { display: flex; flex-direction: column; }
.thumb { width: 100%; border: 1px solid #888e99; }
.thumb-m, .blue-m, .amp { font: 8px "Liberation Sans", sans-serif; text-anchor: middle; stroke-width: .4; }
.thumb-m { fill: #666; stroke: #666; }
.blue-m { fill: #0b32ff; stroke: #0b32ff; font-size: 9px; font-weight: bold; }
nav { flex: 1; border: 1px solid #888e99; border-width: 1px 1px 0; padding: 1px 2px; display: flex; flex-direction: column; align-items: flex-start; }
nav a { color: #111; text-decoration: none; }
nav .cur { background: #eee; }
nav .apart { margin-top: 9px; }
.p-main { border-left: 1px solid #999; margin-left: 3px; display: flex; flex-direction: column; }
.p-tools { height: 19px; display: flex; align-items: center; background: #ebf3fc; padding-left: 2px; }
.p-tools button { width: 16px; height: 15px; flex: none; }
.p-tools svg { width: 13px; height: 13px; }
.p-tools i { width: 1px; height: 13px; margin: 0 1px; background: #aeb6c2; }
.p-sub { display: flex; align-items: center; gap: 2px; height: 12px; }
.carousel { display: flex; align-items: center; padding: 0 3px 0 3px; }
.carousel button { width: 12px; height: 14px; flex: none; }
.carousel button svg { width: 12px; height: 14px; }
.carousel .prev { background: #eee; }
.model { flex: 1; min-width: 0; }
.sym { font: italic 8px "Liberation Sans", sans-serif; fill: #222; }
.sym .sub { font-size: 6px; font-weight: bold; font-style: normal; }
.sym .pink { fill: #f0c; }
.amp { font-size: 9px; font-weight: bold; }
.splitter { height: 8px; border-top: 1px solid #ccc; display: flex; align-items: center; justify-content: center; }
.splitter::after { content: ""; width: 28px; border-top: 2px dotted #777; }
.sheet { display: grid; grid-template-columns: 10px minmax(0, 1fr) 10px; height: 274px; overflow: hidden; background: #e8e8e8; border-bottom: 1px solid #444; }
h3 { height: 12px; line-height: 12px; font-size: 6px; text-decoration: underline; }
h3::before { content: "−"; display: inline-block; width: 5px; height: 5px; line-height: 4px; text-align: center; margin: 0 3px 0 -8px; border: 1px solid #999; font-size: 5px; vertical-align: middle; }
.gutter { background: #e8e8e8; }
table { width: 100%; table-layout: fixed; border-collapse: collapse; background: #fff; outline: 1px solid #aaadb3; outline-offset: -1px; }
td, th { padding: 0; border-bottom: 1px solid #eee; font-weight: 600; text-align: left; white-space: nowrap; vertical-align: middle; line-height: 9px; }
td + td { border-left: 1px solid #eee; }
.one { height: 14px; }
.four { height: 52px; }
.many { height: 154px; }
.hot { background: linear-gradient(#e8f7ff, #c4e9fb); }
.c-star { width: 18px; }
.c-ico { width: 14px; }
.c-name { width: 171px; }
.c-chk { width: 23px; }
.c-val { width: 132px; }
.c-unit { width: 61px; }
.c-s { width: 23px; }
.bl { color: #2f74cf; }
td svg, td input { display: block; margin: auto; }
.st { width: 8px; height: 8px; fill: #999; }
.gold { fill: #f0921e; }
.cp { width: 8px; height: 8px; }
input[type="checkbox"] { appearance: none; width: 9px; height: 8px; border: 1px solid #888; background: #fff; }
input:disabled { background: #ddd; border-color: #bbb; }
select { appearance: none; border: 0; margin: 0; padding: 0; font: inherit; color: #222; background: none; min-width: 0; display: block; }
.pick { position: relative; }
.pick select { width: 117px; height: 11px; margin-left: 7px; padding-left: 3px; background: #ebebeb; }
.pick::after { content: ""; position: absolute; right: 12px; top: 4px; width: 3px; height: 3px; border: solid #666; border-width: 0 1px 1px 0; rotate: 45deg; }
.hot select { background: #e3eef3; }
.pick select, .num, .unit { font-weight: normal; }
.menu { position: absolute; z-index: 2; left: 7px; top: 12px; width: 117px; height: 106px; display: flex; flex-direction: column; background: #fff; border: 1px solid #777; box-shadow: 2px 2px 1px #999; font-weight: normal; }
.menu li { flex: 1; padding-left: 3px; line-height: 10px; }
.menu [aria-selected] { background: #cbe6f6; outline: 1px solid #3a9bd0; }
.frame { position: absolute; z-index: 3; left: -3px; top: -8px; width: 137px; height: 134px; border: 6px solid #ea1c20; }
.num { text-align: right; padding-right: 8px; }
.dim { color: #999; }
.unit { display: flex; width: 46px; height: 9px; margin-left: 7px; border: 1px solid #888; border-radius: 2px; background: #fff; overflow: hidden; }
.unit select { flex: 1; line-height: 7px; padding-left: 1px; }
.unit b { width: 11px; flex: none; background: linear-gradient(#f4f4f4, #bbb); border-left: 1px solid #999; display: flex; align-items: center; justify-content: center; }
.unit b::before { content: ""; border: 2px solid transparent; border-top: 3px solid #333; border-bottom: 0; }
.off { opacity: .5; }
.v-scroll { background: #f1f1f1; display: flex; flex-direction: column; justify-content: space-between; align-items: center; }
.v-scroll svg { width: 8px; height: 10px; }
.v-scroll div { width: 100%; height: 61px; background: #cdcdcd; margin-bottom: auto; }
.p-foot { display: flex; gap: 3px; height: 8px; overflow: hidden; }
```
